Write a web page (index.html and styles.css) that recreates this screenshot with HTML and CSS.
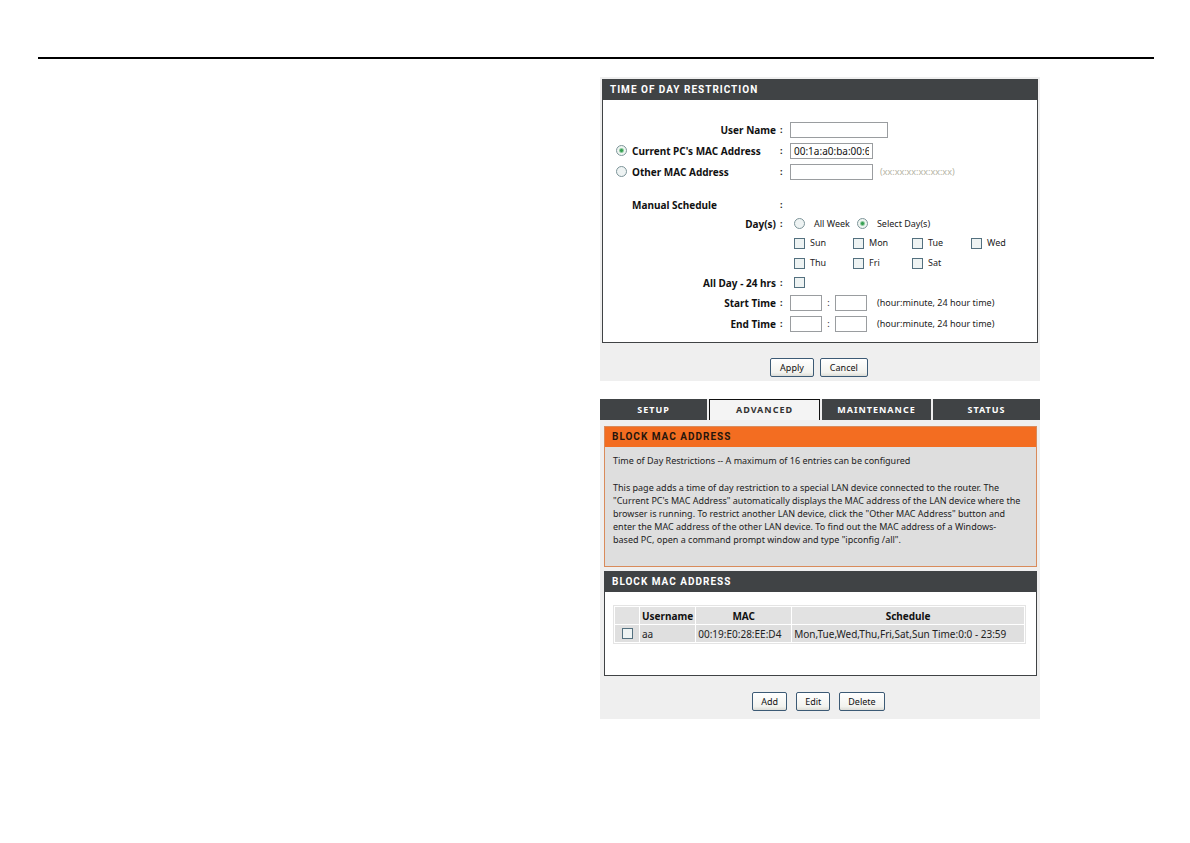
FILE: index.html
```html
<!DOCTYPE html>
<html lang="en">
<head>
  <meta charset="UTF-8" />
  <meta name="viewport" content="width=device-width, initial-scale=1.0"/>
  <title>Time of Day Restriction</title>
  <link rel="stylesheet" href="styles.css">
</head>
<body>

  <hr class="page-rule">

  <main class="page">
    <div class="column">

      <!-- Add restriction form -->
      <form class="panel panel-form">
        <section class="box">
          <h2 class="box-title">TIME OF DAY RESTRICTION</h2>
          <div class="form-body">
            <div class="row">
              <label class="name" for="user">User Name</label><span class="colon">:</span>
              <input type="text" class="text wide" id="user">
            </div>
            <div class="row">
              <span class="pick">
                <input type="radio" name="mac" id="mac-current" checked>
                <label for="mac-current">Current PC's MAC Address</label>
              </span><span class="colon">:</span>
              <input type="text" class="text" aria-label="Current MAC" value="00:1a:a0:ba:00:6c">
            </div>
            <div class="row">
              <span class="pick">
                <input type="radio" name="mac" id="mac-other">
                <label for="mac-other">Other MAC Address</label>
              </span><span class="colon">:</span>
              <input type="text" class="text" aria-label="Other MAC">
              <span class="hint pale">(xx:xx:xx:xx:xx:xx)</span>
            </div>

            <div class="row short schedule">
              <span class="name left">Manual Schedule</span><span class="colon">:</span>
            </div>
            <div class="row short">
              <span class="name">Day(s)</span><span class="colon">:</span>
              <div class="choices">
                <input type="radio" name="days" id="all-week">
                <label for="all-week">All Week</label>
                <input type="radio" name="days" id="select-days" checked>
                <label for="select-days">Select Day(s)</label>
              </div>
            </div>
            <div class="days">
              <label><input type="checkbox"> Sun</label>
              <label><input type="checkbox"> Mon</label>
              <label><input type="checkbox"> Tue</label>
              <label><input type="checkbox"> Wed</label>
              <label><input type="checkbox"> Thu</label>
              <label><input type="checkbox"> Fri</label>
              <label><input type="checkbox"> Sat</label>
            </div>
            <div class="row short">
              <label class="name" for="all-day">All Day - 24 hrs</label><span class="colon">:</span>
              <div class="choices"><input type="checkbox" id="all-day"></div>
            </div>
            <div class="row">
              <label class="name" for="start">Start Time</label><span class="colon">:</span>
              <input type="text" class="text time" id="start">
              <span class="sep">:</span>
              <input type="text" class="text time" aria-label="Start minute">
              <span class="hint">(hour:minute, 24 hour time)</span>
            </div>
            <div class="row">
              <label class="name" for="end">End Time</label><span class="colon">:</span>
              <input type="text" class="text time" id="end">
              <span class="sep">:</span>
              <input type="text" class="text time" aria-label="End minute">
              <span class="hint">(hour:minute, 24 hour time)</span>
            </div>
          </div>
        </section>
        <div class="buttons">
          <button type="button">Apply</button>
          <button type="button">Cancel</button>
        </div>
      </form>

      <!-- Block list -->
      <div class="panel panel-list">
        <nav class="tabs">
          <a href="#">SETUP</a>
          <a href="#" class="active">ADVANCED</a>
          <a href="#">MAINTENANCE</a>
          <a href="#">STATUS</a>
        </nav>
        <section class="box info">
          <h2 class="box-title">BLOCK MAC ADDRESS</h2>
          <div class="info-body">
            <p>Time of Day Restrictions -- A maximum of 16 entries can be configured</p>
            <p>This page adds a time of day restriction to a special LAN device connected to the router. The<br>
            "Current PC's MAC Address" automatically displays the MAC address of the LAN device where the<br>
            browser is running. To restrict another LAN device, click the "Other MAC Address" button and<br>
            enter the MAC address of the other LAN device. To find out the MAC address of a Windows-<br>
            based PC, open a command prompt window and type "ipconfig /all".</p>
          </div>
        </section>
        <section class="box">
          <h2 class="box-title">BLOCK MAC ADDRESS</h2>
          <div class="list-body">
            <table class="list">
              <thead>
                <tr><th class="c-tick"></th><th class="c-user">Username</th><th class="c-mac">MAC</th><th>Schedule</th></tr>
              </thead>
              <tbody>
                <tr>
                  <td class="c-tick"><input type="checkbox" aria-label="Select aa"></td>
                  <td>aa</td>
                  <td>00:19:E0:28:EE:D4</td>
                  <td>Mon,Tue,Wed,Thu,Fri,Sat,Sun Time:0:0 - 23:59</td>
                </tr>
              </tbody>
            </table>
          </div>
        </section>
        <div class="buttons spaced">
          <button type="button">Add</button>
          <button type="button">Edit</button>
          <button type="button">Delete</button>
        </div>
      </div>

    </div>
  </main>

</body>
</html>
```
FILE: styles.css
```css
* { margin: 0; padding: 0; box-sizing: border-box; }
body {
  background: #fff;
  color: #222;
  font-family: "Noto Sans", "Open Sans", sans-serif;
  font-size: 9px;
  line-height: 12px;
  padding: 57px 36px 40px 38px;
}

.page-rule { border: none; height: 2px; background: #000; }

.page {
  display: grid;
  grid-template-columns: 562fr 440fr 114fr;
  padding-top: 18px;
}
.column {
  grid-column: 2;
  display: flex;
  flex-direction: column;
  gap: 18px;
}

.panel { background: #efefef; }
.panel-form { padding: 2px 2px 0; }

.box { background: #fff; border: 1px solid #404345; }
.box-title {
  height: 20px;
  padding: 0 7px;
  background: #404345;
  color: #fff;
  font-family: Roboto, "Noto Sans", sans-serif;
  font-size: 10px;
  line-height: 20px;
  letter-spacing: 1px;
}

/* form rows */
.form-body { padding: 19px 0 8px; }
.row { display: flex; align-items: center; height: 21px; }
.row.short { height: 19px; }
.schedule { margin-top: 13px; }
.name, .pick { width: 173px; flex: none; font-size: 10px; font-weight: bold; color: #111; }
.name { text-align: right; }
.name.left { text-align: left; padding-left: 29px; }
.pick { display: flex; align-items: center; gap: 5px; padding-left: 13px; }
.colon { width: 14px; padding-left: 4px; flex: none; font-weight: bold; }

.text {
  width: 83px;
  height: 16px;
  padding: 0 3px;
  border: 1px solid #9a9da0;
  background: #fff;
  font: inherit;
  font-size: 10px;
  color: #111;
}
.text.wide { width: 98px; }
.text.time { width: 32px; }
.sep { width: 13px; text-align: center; }
.hint { padding-left: 10px; }
.hint.pale { padding-left: 7px; color: #b5b4a4; }

.choices { display: flex; align-items: center; gap: 9px; padding-left: 4px; }
.choices label { margin-right: -2px; }

input[type="radio"], input[type="checkbox"] {
  appearance: none;
  flex: none;
  width: 11px;
  height: 11px;
  border: 1px solid #53707f;
  background: #eef3f3;
}
input[type="radio"] { border-color: #7d9499; border-radius: 50%; }
input[type="radio"]:checked {
  background: radial-gradient(circle, #36a052 0 1px, #eef5f1 3px);
}

.days {
  display: grid;
  grid-template-columns: repeat(4, 59px);
  padding-left: 191px;
}
.days label { display: flex; align-items: center; gap: 5px; height: 20px; }

/* buttons */
.buttons { display: flex; justify-content: center; gap: 6px; padding: 15px 2px 4px 0; }
.buttons.spaced { gap: 9px; padding: 16px 3px 8px 0; }
button {
  height: 19px;
  padding: 0 9px;
  border: 1px solid #3c5a75;
  border-radius: 2px;
  background: linear-gradient(#fff, #f2f2ee 80%, #dcdcd6);
  font: inherit;
  color: #111;
}
.spaced button { padding: 0 8px; }

/* tabs */
.tabs { display: grid; grid-template-columns: 107fr 111fr 109fr 107fr; gap: 2px; }
.tabs a {
  height: 21px;
  background: #404345;
  color: #fff;
  font-weight: bold;
  line-height: 21px;
  letter-spacing: 1px;
  text-align: center;
  text-decoration: none;
}
.tabs .active { background: #f4f4f4; color: #333; border: 1px solid #111; border-bottom: none; line-height: 20px; }

.panel-list .box { margin: 4px 3px 0 4px; }
.panel-list .info { margin-top: 6px; border-color: #d98b5b; background: #dedede; }
.info .box-title { background: #f36d21; color: #26150c; }
.info-body { padding: 7px 8px 20px; line-height: 13px; }
.info-body p + p { margin-top: 14px; }

.list-body { padding: 13px 10px 31px 8px; }
.list { width: 100%; border: 1px solid #e4e4e4; border-spacing: 1px; font-size: 10px; }
.list th, .list td { height: 17px; padding: 0 2px; background: #dfdfdf; text-align: left; white-space: nowrap; }
.list th { text-align: center; background: #e2e2e2; color: #111; }
.list .c-tick { width: 24px; text-align: center; }
.list .c-tick input { display: block; margin: auto; }
.c-user { width: 53px; }
.c-mac { width: 95px; }
```
